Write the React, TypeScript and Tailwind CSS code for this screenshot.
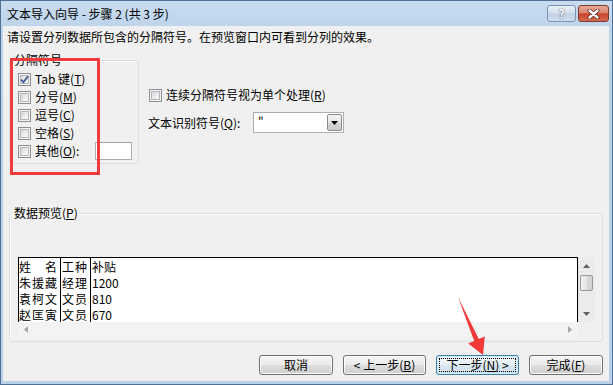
import type { ReactNode } from "react";

const font = "font-['Noto_Sans_CJK_SC',sans-serif]";

function Key({ k }: { k: string }) {
  return (
    <>
      (<span className="underline underline-offset-1">{k}</span>)
    </>
  );
}

function Checkbox({ checked = false }: { checked?: boolean }) {
  return (
    <span className="flex h-[13px] w-[13px] shrink-0 items-center justify-center border border-[#8e8f8f] bg-[#f4f4f4]">
      <span className="relative flex h-[9px] w-[9px] items-center justify-center border border-[#b3b6ba] bg-gradient-to-br from-[#d6d8db] to-[#fbfbfb]">
        {checked && (
          <svg width="11" height="11" viewBox="0 0 11 11" className="absolute -left-[2px] -top-[2px]">
            <path d="M2.2 5.6 L4.4 8.2 L9 2.4" fill="none" stroke="#3d5592" strokeWidth="1.7" />
          </svg>
        )}
      </span>
    </span>
  );
}

function CheckRow({ checked, children }: { checked?: boolean; children: ReactNode }) {
  return (
    <div className="flex h-[18px] items-center gap-[4px]">
      <Checkbox checked={checked} />
      <span className="text-[12px] leading-[16px]">{children}</span>
    </div>
  );
}

const btnBase =
  "flex h-[20px] items-center justify-center rounded-[3px] border text-[12px] leading-[14px] text-black";
const btnNormal =
  "border-[#707070] bg-[linear-gradient(#f4f4f4,#ebebeb_48%,#dddddd_52%,#cfcfcf)] shadow-[inset_0_0_0_1px_#fbfbfb]";

function Tri({ dir }: { dir: "up" | "down" | "left" | "right" }) {
  const pts = {
    up: "0,4 3.5,0 7,4",
    down: "0,0 7,0 3.5,4",
    left: "4,0 4,7 0,3.5",
    right: "0,0 4,3.5 0,7",
  }[dir];
  const w = dir === "up" || dir === "down" ? 7 : 4;
  const h = dir === "up" || dir === "down" ? 4 : 7;
  return (
    <svg width={w} height={h} viewBox={`0 0 ${w} ${h}`}>
      <polygon points={pts} fill={dir === "left" || dir === "right" ? "#a6a6a6" : "#606060"} />
    </svg>
  );
}

const rows = [
  ["姓　名", "工种", "补贴"],
  ["朱援藏", "经理", "1200"],
  ["袁柯文", "文员", "810"],
  ["赵匡寅", "文员", "670"],
];

export default function App() {
  return (
    <div
      className={`relative flex h-[385px] w-[613px] flex-col overflow-hidden border border-[#4f7196] bg-[linear-gradient(#cadcf0,#bcd3eb_30px,#b9d0ea)] text-black ${font}`}
    >
      {/* title bar */}
      <div className="flex h-[25px] shrink-0 items-center justify-between pl-[6px] pr-[3px]">
        <span className="text-[12px] leading-[16px] text-black">文本导入向导 - 步骤 2 (共 3 步)</span>
        <div className="flex items-center gap-[2px]">
          <div className="flex h-[17px] w-[29px] items-center justify-center rounded-[3px] border border-[#7b93b3] bg-[linear-gradient(#eaf0f7,#d5e0ec_45%,#c1d1e4_52%,#cfdcec)]">
            <span className="text-[13px] font-bold leading-[13px] text-white [text-shadow:0_0_1px_#3b4a5e,0_0_1px_#3b4a5e]">?</span>
          </div>
          <div className="flex h-[17px] w-[31px] items-center justify-center rounded-[3px] border border-[#7d3a2e] bg-[linear-gradient(#e9a898,#dc8671_45%,#c8452c_52%,#d56a50)]">
            <svg width="13" height="10" viewBox="0 0 13 10">
              <path d="M2.5 1.5 L10.5 8.5 M10.5 1.5 L2.5 8.5" stroke="#5b2219" strokeWidth="4" strokeLinecap="round" />
              <path d="M2.5 1.5 L10.5 8.5 M10.5 1.5 L2.5 8.5" stroke="#ffffff" strokeWidth="2.4" strokeLinecap="round" />
            </svg>
          </div>
        </div>
      </div>

      {/* client area */}
      <div className="mb-[3px] ml-[2px] mr-[3px] flex flex-1 flex-col bg-[#f0f0f0]">
        <p className="pl-[4px] pt-[3px] text-[12px] leading-[16px]">
          请设置分列数据所包含的分隔符号。在预览窗口内可看到分列的效果。
        </p>

        <div className="mt-[7px] flex pl-[6px]">
          <fieldset className="h-[112px] w-[130px] rounded-[3px] border border-[#d5dfe5] shadow-[inset_1px_1px_0_#ffffff]">
            <legend className="ml-[3px] px-[1px] text-[12px] leading-[16px]">分隔符号</legend>
            <div className="flex flex-col pl-[8px] pt-[2px]">
              <CheckRow checked>
                Tab 键<Key k="T" />
              </CheckRow>
              <CheckRow>
                分号<Key k="M" />
              </CheckRow>
              <CheckRow>
                逗号<Key k="C" />
              </CheckRow>
              <CheckRow>
                空格<Key k="S" />
              </CheckRow>
              <div className="flex h-[18px] items-center gap-[4px]">
                <Checkbox />
                <span className="w-[56px] text-[12px] leading-[16px]">
                  其他<Key k="O" />:
                </span>
                <span className="h-[18px] w-[37px] border border-[#abadb3] border-t-[#a0a3aa] bg-white" />
              </div>
            </div>
          </fieldset>

          <div className="ml-[9px] flex flex-col pt-[34px]">
            <div className="flex h-[18px] items-center gap-[4px] pl-[1px]">
              <Checkbox />
              <span className="text-[12px] leading-[16px]">
                连续分隔符号视为单个处理<Key k="R" />
              </span>
            </div>
            <div className="mt-[8px] flex h-[21px] items-center">
              <span className="w-[105px] text-[12px] leading-[16px]">
                文本识别符号<Key k="Q" />:
              </span>
              <div className="flex h-[21px] w-[91px] items-stretch border border-[#abadb3] bg-white p-[1px]">
                <span className="flex-1 pl-[3px] text-[12px] leading-[14px]">"</span>
                <span className="flex w-[15px] items-center justify-center rounded-[2px] border border-[#8a8a8a] bg-[linear-gradient(#f4f4f4,#e6e6e6_50%,#d6d6d6_52%,#cccccc)]">
                  <svg width="7" height="4" viewBox="0 0 7 4">
                    <polygon points="0,0 7,0 3.5,4" fill="#000000" />
                  </svg>
                </span>
              </div>
            </div>
          </div>
        </div>

        <fieldset className="ml-[6px] mt-[41px] h-[137px] w-[594px] rounded-[3px] border border-[#d5dfe5] shadow-[inset_1px_1px_0_#ffffff]">
          <legend className="ml-[3px] px-[1px] text-[12px] leading-[16px]">
            数据预览<Key k="P" />
          </legend>
          <div className="ml-[8px] mt-[36px] grid h-[80px] w-[577px] grid-cols-[560px_17px] grid-rows-[65px_15px]">
            <div className="flex overflow-hidden border-l border-r border-t border-black bg-white text-[12px] leading-[16px]">
              <div className="flex w-[42px] flex-col border-r border-black pt-[1px] tracking-[1px]">
                {rows.map((r) => (
                  <span key={r[0]} className="h-[16px] whitespace-nowrap">
                    {r[0]}
                  </span>
                ))}
              </div>
              <div className="flex w-[30px] flex-col border-r border-black pl-[1px] pt-[1px] tracking-[1px]">
                {rows.map((r) => (
                  <span key={r[0]} className="h-[16px] whitespace-nowrap">
                    {r[1]}
                  </span>
                ))}
              </div>
              <div className="flex flex-1 flex-col pl-[1px] pt-[1px]">
                {rows.map((r) => (
                  <span key={r[0]} className="h-[16px] whitespace-nowrap">
                    {r[2]}
                  </span>
                ))}
              </div>
            </div>
            <div className="flex flex-col items-center bg-[#ebebeb] shadow-[inset_1px_0_0_#e3e3e3]">
              <span className="flex h-[17px] items-center justify-center">
                <Tri dir="up" />
              </span>
              <span className="mt-[1px] h-[16px] w-[13px] rounded-[2px] border border-[#979797] bg-[linear-gradient(90deg,#f3f3f3,#e6e6e6_50%,#d9d9d9_52%,#d2d2d2)]" />
              <span className="flex-1" />
              <span className="flex h-[17px] items-center justify-center">
                <Tri dir="down" />
              </span>
            </div>
            <div className="flex items-center justify-between bg-[#f3f3f3] pl-[6px] pr-[6px]">
              <Tri dir="left" />
              <Tri dir="right" />
            </div>
            <div className="bg-[#f0f0f0]" />
          </div>
        </fieldset>

        <div className="mt-[13px] flex justify-end gap-[10px] pr-[6px]">
          <button className={`${btnBase} ${btnNormal} w-[74px]`}>取消</button>
          <button className={`${btnBase} ${btnNormal} w-[83px]`}>
            &lt; 上一步<Key k="B" />
          </button>
          <button
            className={`${btnBase} w-[83px] border-[#3c7fb1] bg-[linear-gradient(#f1f7fb,#e6eff6_48%,#d8e6f1_52%,#cfdfec)] p-[2px] shadow-[inset_0_0_0_1px_#d3ecfb]`}
          >
            <span className="flex h-full w-full items-center justify-center border border-dotted border-black">
              下一步<Key k="N" /> &gt;
            </span>
          </button>
          <button className={`${btnBase} ${btnNormal} w-[74px]`}>
            完成<Key k="F" />
          </button>
        </div>
      </div>

      {/* annotation: red box */}
      <div className="pointer-events-none absolute left-[9px] top-[57px] h-[117px] w-[90px] border-[3px] border-[#ee3b3b]" />
      {/* annotation: red arrow */}
      <svg
        width="45"
        height="70"
        viewBox="0 0 45 70"
        className="pointer-events-none absolute left-[449px] top-[289px]"
      >
        <polygon points="8,7 28.8,49 34.8,46.4 33,65 18.2,53.6 24.2,51" fill="#f03a3a" />
      </svg>
    </div>
  );
}
